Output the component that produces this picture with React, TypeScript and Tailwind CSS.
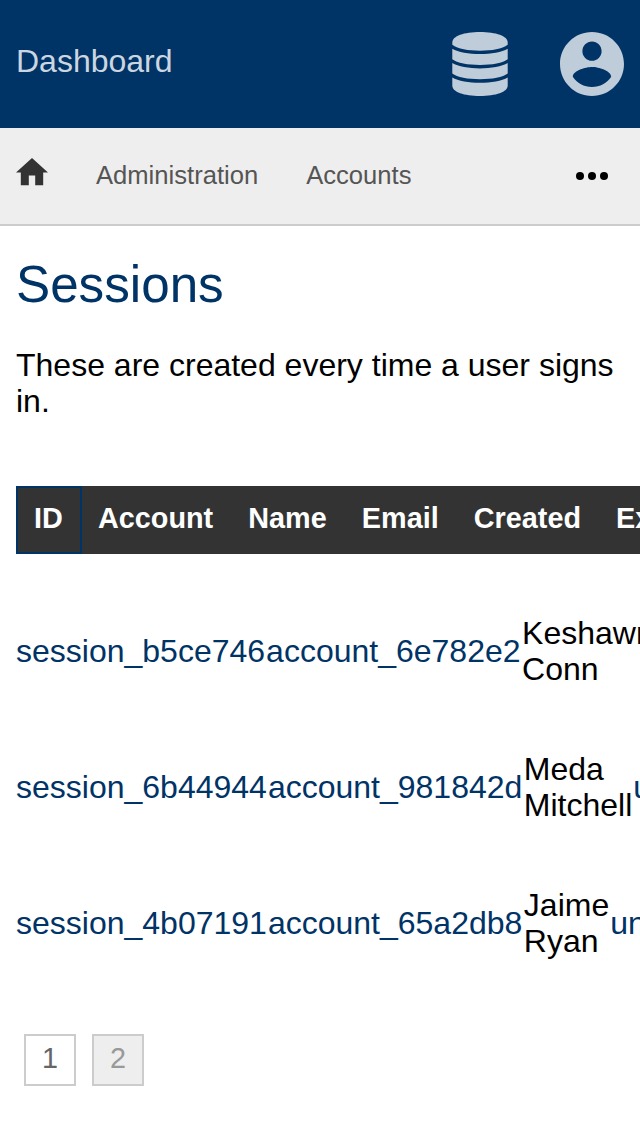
import React from "react";

type Session = { id: string; account: string; name: [string, string]; email: string };

const columns = ["ID", "Account", "Name", "Email", "Created", "Expires"];

const sessions: Session[] = [
  { id: "session_b5ce746", account: "account_6e782e2", name: ["Keshawn", "Conn"], email: "un" },
  { id: "session_6b44944", account: "account_981842d", name: ["Meda", "Mitchell"], email: "un" },
  { id: "session_4b07191", account: "account_65a2db8", name: ["Jaime", "Ryan"], email: "un" },
];

function DatabaseIcon() {
  return (
    <svg className="h-16 w-14" viewBox="0 0 56 64" fill="currentColor" aria-hidden="true">
      <path d="M.3 10.500C.3 4 12 0 28 0s27.700 4 27.700 10.500v2.300C50 17 40 18.700 28 18.700S6 17 .3 12.800z" />
      <path d="M.3 16.700C6 20.300 17 22 28 22s22-1.700 27.700-5.300v10.500C51 31 40 32.900 28 32.900S5 31 .3 27.200z" />
      <path d="M.3 31.100C6 34.700 17 36.400 28 36.400s22-1.700 27.700-5.300v10.500C51 45.400 40 47.300 28 47.300S5 45.400 .3 41.600z" />
      <path d="M.3 45.500C6 49.100 17 50.800 28 50.800s22-1.700 27.700-5.300v8C55.700 60 44 64 28 64S.3 60 .3 53.500z" />
    </svg>
  );
}

function AccountIcon() {
  return (
    <svg className="size-16" viewBox="2 2 20 20" fill="currentColor" aria-hidden="true">
      <path d="M12 2C6.480 2 2 6.480 2 12s4.480 10 10 10 10-4.480 10-10S17.520 2 12 2zm0 3c1.660 0 3 1.340 3 3s-1.340 3-3 3-3-1.340-3-3 1.340-3 3-3zm0 14.200c-2.500 0-4.710-1.280-6-3.220.030-1.990 4-3.080 6-3.080 1.990 0 5.970 1.090 6 3.080-1.290 1.940-3.500 3.220-6 3.220z" />
    </svg>
  );
}

function HomeIcon() {
  return (
    <svg className="mb-2 h-[27.2px] w-8" viewBox="2 3 20 17" fill="currentColor" aria-hidden="true">
      <path d="M10 20v-6h4v6h5v-8h3L12 3 2 12h3v8z" />
    </svg>
  );
}

export default function App() {
  return (
    <div className="h-[1136px] w-full overflow-hidden bg-white font-['Liberation_Sans',sans-serif] text-[32px] leading-9 text-black">
      <header className="flex h-32 items-center justify-between bg-[#003366] px-4 text-[#bfccd9]">
        <a className="pb-1.5 text-[#ccd6e0]">Dashboard</a>
        <div className="flex gap-[52px]">
          <DatabaseIcon />
          <AccountIcon />
        </div>
      </header>

      <nav className="flex h-[98px] items-center border-b-2 border-[#cccccc] bg-[#eeeeee] pl-4 pr-8 text-[25.6px] text-[#555555]">
        <a className="text-[#333333]"><HomeIcon /></a>
        <a className="ml-12 pb-0.5">Administration</a>
        <a className="ml-12 pb-0.5">Accounts</a>
        <svg className="ml-auto h-2 w-8" viewBox="0 0 32 8" fill="#000000" aria-hidden="true">
          <circle cx="4" cy="4" r="4" />
          <circle cx="16" cy="4" r="4" />
          <circle cx="28" cy="4" r="4" />
        </svg>
      </nav>

      <main className="px-4 pt-[30px]">
        <h1 className="text-[51.2px] leading-[58px] text-[#003366]">Sessions</h1>
        <p className="mt-[33px]">These are created every time a user signs in.</p>

        <div className="mt-[67px]">
          <div className="flex h-[68px] w-[1000px] bg-[#333333] text-[28.8px] font-bold text-white">
            {columns.map((column, index) => (
              <div
                key={column}
                className={
                  index === 0
                    ? "flex shrink-0 items-center border-2 border-[#003366] pb-1 pl-4 pr-[17.2px]"
                    : "-ml-0.5 flex shrink-0 items-center border-2 border-transparent pb-1 pl-4 pr-[17.1px]"
                }
              >
                {column}
              </div>
            ))}
          </div>
          <div className="pt-[29px]">
            {sessions.map((session) => (
              <div key={session.id} className="flex h-[136px] w-[1000px] items-center whitespace-nowrap">
                <a className="text-[#003366]">{session.id}</a>
                <a className="ml-px text-[#003366]">{session.account}</a>
                <div className="pl-[1.5px] pr-px">
                  {session.name[0]}
                  <br />
                  {session.name[1]}
                </div>
                <a className="text-[#003366]">{session.email}</a>
              </div>
            ))}
          </div>
        </div>

        <div className="ml-2 mt-[43px] flex gap-4 text-[28.8px]">
          <a className="flex size-[52px] items-center justify-center border-2 border-[#cccccc] pb-1 text-[#666666]">1</a>
          <a className="flex size-[52px] items-center justify-center border-2 border-[#cccccc] bg-[#eeeeee] pb-1 text-[#999999]">2</a>
        </div>
      </main>
    </div>
  );
}
